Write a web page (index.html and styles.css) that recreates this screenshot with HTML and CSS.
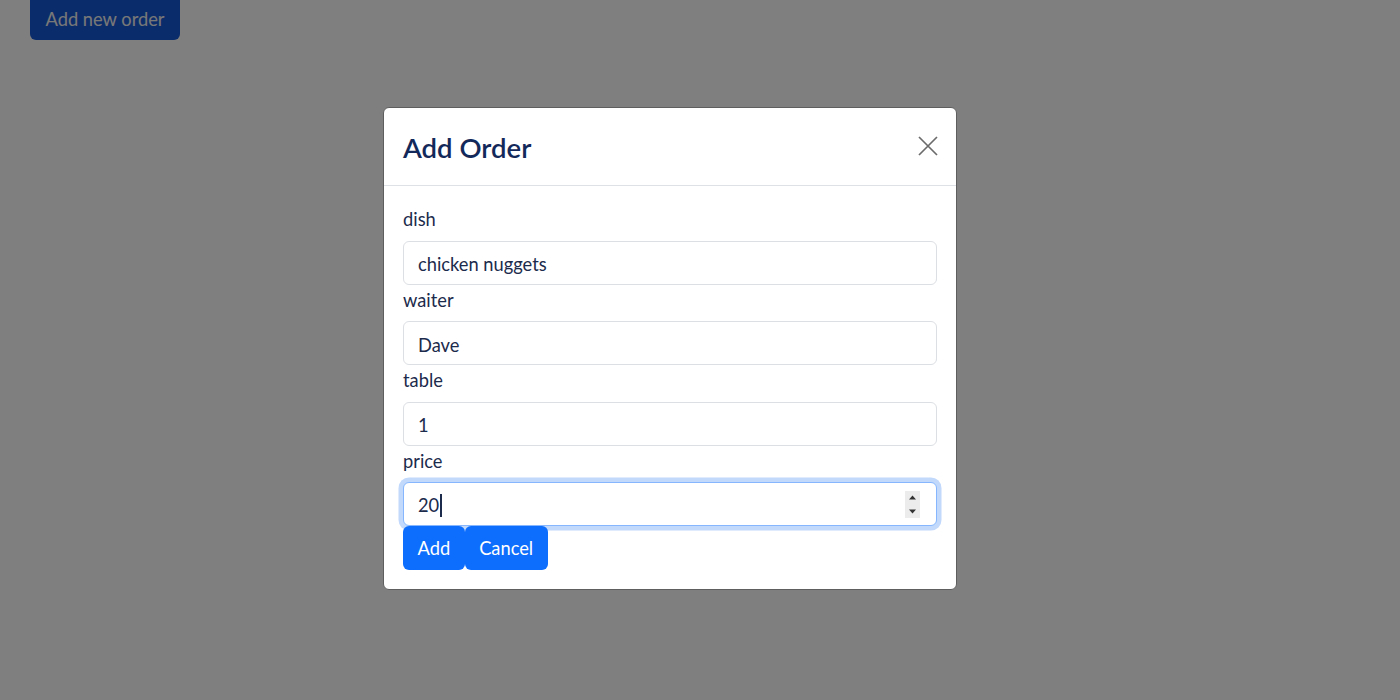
FILE: index.html
```html
<!DOCTYPE html>
<html lang="en">
<head>
<meta charset="utf-8">
<title>Orders</title>
<link rel="stylesheet" href="styles.css">
</head>
<body>
<div class="page">
  <button class="btn btn-new">Add new order</button>
</div>
<div class="backdrop">
  <div class="modal">
    <div class="modal-header">
      <h4 class="modal-title">Add Order</h4>
      <button class="btn-close" aria-label="Close">
        <svg width="20" height="20" viewBox="0 0 20 20"><path d="M1 1L19 19M19 1L1 19" stroke="currentColor" stroke-width="1.7" fill="none"/></svg>
      </button>
    </div>
    <form class="modal-body">
      <label class="form-label">dish</label>
      <input class="form-control" type="text" value="chicken nuggets">
      <label class="form-label">waiter</label>
      <input class="form-control" type="text" value="Dave">
      <label class="form-label">table</label>
      <input class="form-control" type="text" value="1">
      <label class="form-label">price</label>
      <div class="form-control focused">
        <span class="value">20</span><span class="caret"></span>
        <span class="spin">
          <svg width="15" height="27" viewBox="0 0 15 27"><path d="M7.5 4.5L11 8.5H4Z" fill="#333"/><path d="M7.5 22.5L11 18.5H4Z" fill="#333"/></svg>
        </span>
      </div>
      <div class="actions">
        <button type="button" class="btn btn-primary">Add</button>
        <button type="button" class="btn btn-primary">Cancel</button>
      </div>
    </form>
  </div>
</div>
</body>
</html>
```
FILE: styles.css
```css
* { box-sizing: border-box; }
html, body { margin: 0; height: 100%; }
body {
  background: #fff;
  font-family: Lato, "Open Sans", sans-serif;
  font-size: 18.3px;
  line-height: 27.5px;
  color: #1c2b4c;
  overflow: hidden;
}
.page { padding-left: 30px; }
.btn {
  font-family: inherit;
  font-size: 18.3px;
  line-height: 27.5px;
  border: 0;
  cursor: pointer;
  color: #fff;
}
.btn-new {
  width: 150px;
  height: 40px;
  padding: 6px 14px 0;
  background: #1659d6;
  color: #f0f0f0;
  border-radius: 0 0 6px 6px;
  display: flex;
  align-items: flex-start;
  justify-content: center;
}
.backdrop {
  position: fixed;
  inset: 0;
  background: rgba(0, 0, 0, 0.5);
  padding: 107px 0 0 383px;
}
.modal {
  width: 574px;
  background: #fff;
  border: 1px solid #5e5e5e;
  border-radius: 6px;
}
.modal-header {
  display: flex;
  align-items: center;
  justify-content: space-between;
  padding: 19px 18px 17px 19px;
  border-bottom: 1px solid #dee2e6;
}
.modal-title {
  margin: 0;
  font-size: 27.5px;
  line-height: 41px;
  font-weight: 600;
  color: #13295a;
}
.btn-close {
  background: none;
  border: 0;
  padding: 0;
  width: 20px;
  height: 20px;
  color: #6b6b6b;
  display: flex;
  margin-top: -3px;
}
.modal-body {
  padding: 18px 19px 19px 19px;
  display: flex;
  flex-direction: column;
}
.form-label {
  display: block;
  padding-top: 2px;
  margin-bottom: 7px;
}
.form-control {
  display: flex;
  align-items: center;
  width: 100%;
  height: 44px;
  padding: 3px 14px 0;
  font-family: inherit;
  font-size: 18.3px;
  color: #1c2b4c;
  background: #fff;
  border: 1px solid #dcdfe3;
  border-radius: 6px;
  outline: none;
}
.form-control.focused {
  border-color: #86b7fe;
  box-shadow: 0 0 0 4.5px #c2d9fc;
  padding: 0 16px 0 14px;
}
.value { padding-top: 3px; }
.caret {
  width: 1.5px;
  height: 23px;
  background: #1c2b4c;
  margin: 3px 0 0 1px;
}
.spin {
  margin-left: auto;
  display: flex;
  background: #ececec;
}
.actions { display: flex; }
.btn-primary {
  background: #0d6efd;
  height: 44px;
  padding: 2px 14.5px 0;
  border-radius: 6px;
}
```
